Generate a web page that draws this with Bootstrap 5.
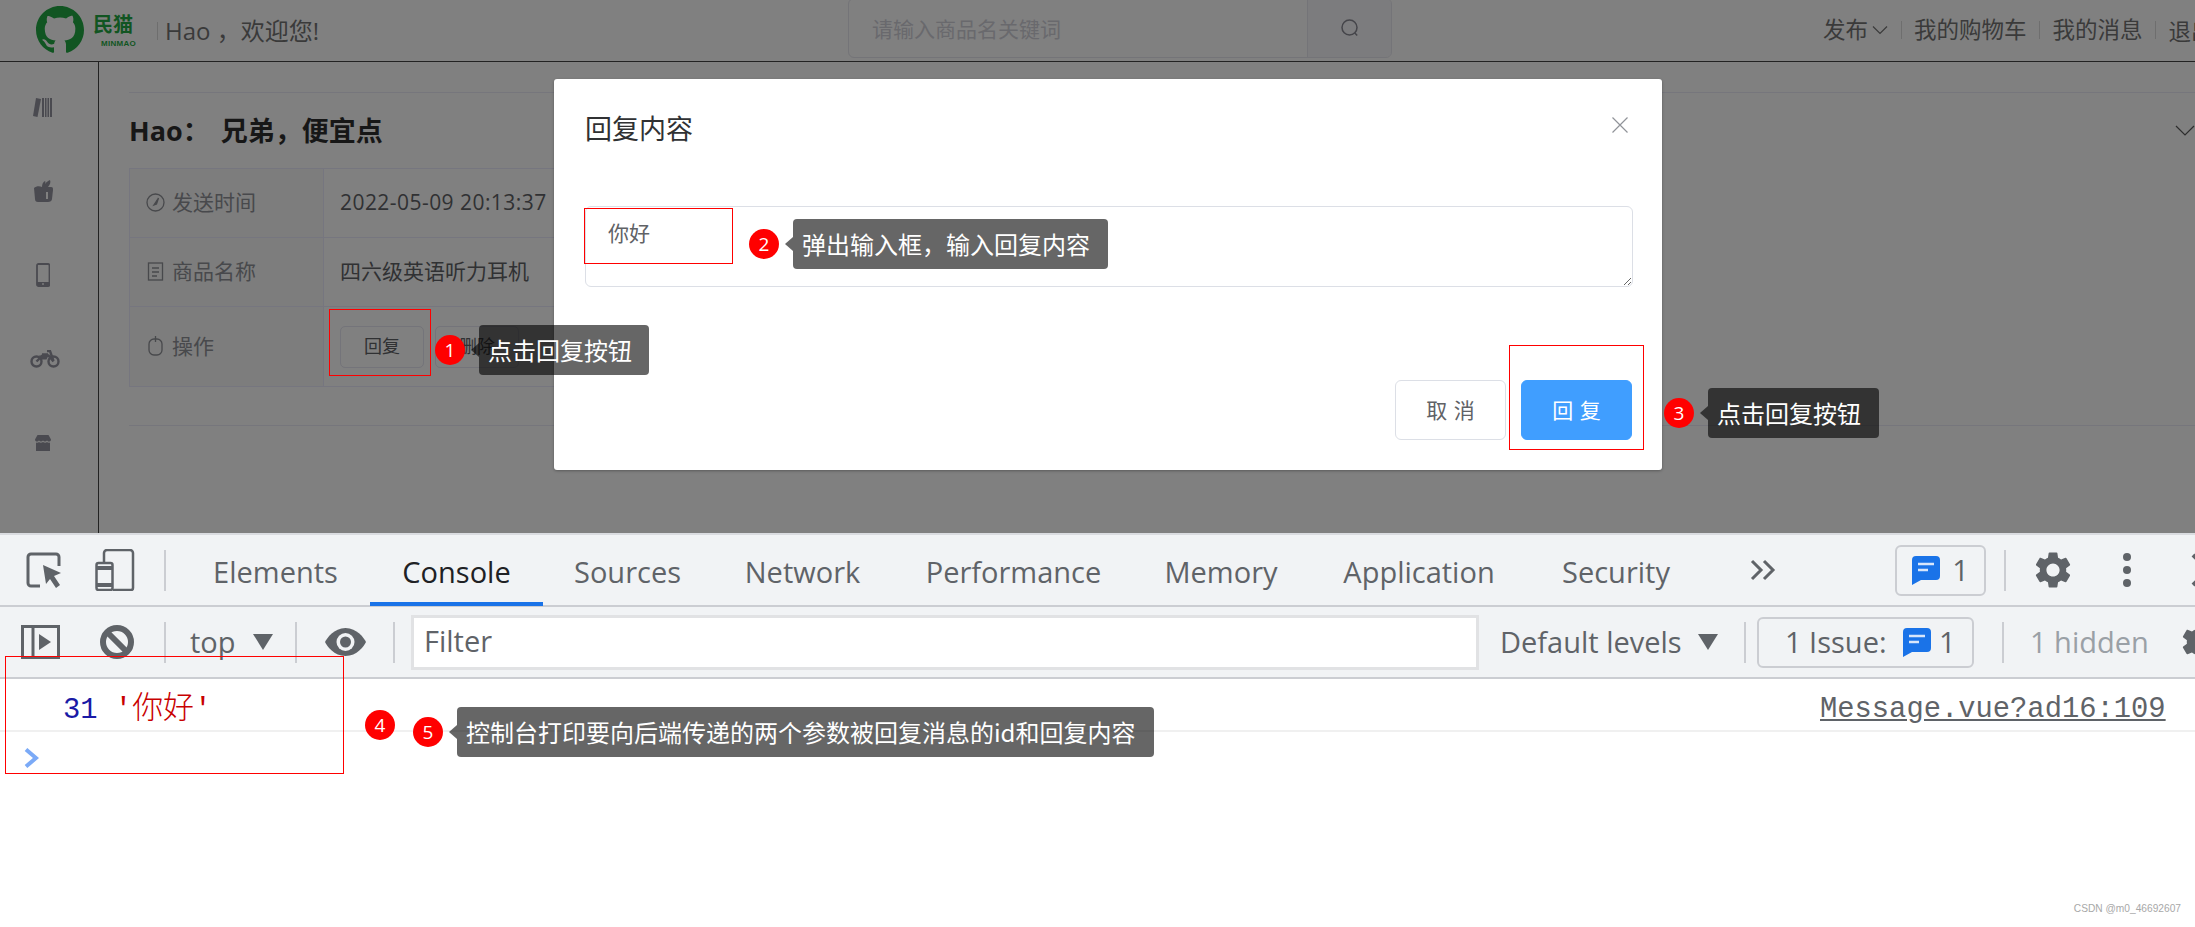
<!doctype html>
<html lang="zh-CN">
<head>
<meta charset="utf-8">
<title>回复内容</title>
<link href="https://cdn.jsdelivr.net/npm/bootstrap@5.3.0/dist/css/bootstrap.min.css" rel="stylesheet">
<style>
html,body{height:100%}
body{position:relative;overflow:hidden;background:#fff;font-family:"Open Sans","Noto Sans CJK SC",sans-serif;color:#202124;width:2195px;height:927px}
.cjk{font-family:"Noto Sans CJK SC",sans-serif}
/* dimmed page */
.dim-zone{height:533px;background:#808080;overflow:hidden}
.dim-head{height:62px;border-bottom:1px solid #222;position:relative}
.logo-mark{width:48px;height:50px;margin-left:36px;margin-top:-1px}
.logo-words{margin-left:9px;color:#115522;width:48px}
.logo-cn{font-size:20px;font-weight:700;line-height:22px;letter-spacing:0}
.logo-en{font-size:8px;font-weight:700;line-height:10px;margin-top:4px;margin-left:8px;letter-spacing:.3px;font-family:"Liberation Sans",sans-serif}
.head-sep{width:1px;height:18px;background:#6e6e6e}
.greet{font-size:24px;color:#3a3a3a;margin-left:7px;white-space:nowrap;width:155px}
.search-wrap{position:absolute;left:848px;top:-2px;width:544px;height:60px;border:1px solid #747478;border-radius:6px;overflow:hidden}
.search-input{padding-left:23px;font-size:21px;color:#69696d;line-height:60px}
.search-btn{width:84px;background:#7c7c7e;border-left:1px solid #747478}
.top-links{position:absolute;left:1823px;top:0;height:60px;font-size:22.5px;color:#3a3a3a;white-space:nowrap}
.top-links .head-sep{height:18px;margin:0 12.5px}
.side-col{width:99px;border-right:1px solid #222;height:471px;padding-right:13px}
.side-ico{height:84px}
.side-first{margin-top:3px}
.main-col{flex:1;padding-left:30px;min-width:0}
.rule{margin:0;border:0;height:1px;background:#76767c;opacity:1}
.rule-top{margin-top:30px}
.msg-title{margin-top:18px;height:40px;font-size:27px;line-height:40px;font-weight:700;color:#171717}
.title-body{margin-left:11px}
.msg-table{width:960px;margin-top:17px;margin-bottom:38px;--bs-table-bg:transparent;--bs-table-color:#303133;--bs-border-color:#76767f;border-color:#76767f;font-size:21px}
.msg-table td{padding:0 16px;vertical-align:middle;border-width:1.5px;line-height:1.2}
.msg-table .lab{width:194px;background:#7d7d7d;color:#48494c;white-space:nowrap}
.msg-table svg{margin-right:7px;vertical-align:-2px}
.stamp{letter-spacing:.45px}
.h69{height:69px}.h80{height:80px}
.btn-mini{width:84px;height:42px;padding:0;font-size:18px;color:#303133;background:transparent;border:1px solid #74747a;border-radius:5px;margin-right:11px}
/* dialog */
.reply-dlg{position:absolute;left:554px;top:79px;width:1108px;height:391px;background:#fff;border-radius:3px;box-shadow:0 1px 3px rgba(0,0,0,.3);padding:30px 30px 30px 31px;color:#303133}
.dlg-title{font-size:27px;line-height:38px;height:38px;color:#303133;margin-bottom:59px}
.dlg-close{position:absolute;left:1058px;top:38px;width:16px;height:16px}
.dlg-area{width:1048px;height:81px;padding:9px 22px 3px;font-size:21px;line-height:32px;color:#606266;border:1.5px solid #dcdfe6;border-radius:6px;font-family:"Noto Sans CJK SC",sans-serif;box-shadow:none}
.dlg-foot{margin-top:93px;gap:15px}
.dlg-btn{width:111px;height:60px;padding:0;font-size:21px;border-radius:6px;border:1.5px solid #dcdfe6;color:#606266;background:#fff;word-spacing:2px}
.dlg-btn.go{background:#409eff;border-color:#409eff;color:#fff}
/* devtools */
.gap-line{height:2px;background:#dadce0}
.dt-bar{height:72px;background:#f1f3f5;border-bottom:2px solid #cbcdd2;position:relative;font-size:29px;color:#5f6368}
.dt-bar>*{flex:none}
.dt-sep{width:2px;height:41px;background:#cbcdd2}
.dt-ico{display:block}
.dt-tabs{margin-left:15px;flex-wrap:nowrap}
.dt-tabs .nav-link{display:flex;align-items:center;justify-content:center;height:72px;padding:8px 0 0;color:#5f6368;border-bottom:4px solid transparent;white-space:nowrap;font-size:29px}
.dt-tabs .nav-link.active{color:#202124;border-bottom-color:#1a73e8}
.w1{width:189px}.w2{width:173px}.w3{width:169px}.w4{width:181px}.w5{width:241px}.w6{width:174px}.w7{width:222px}.w8{width:172px}
.issue-a{width:91px;height:51px;border:2px solid #cbcdd2;border-radius:6px;gap:12px;color:#5f6368}
.issue-b{width:217px;height:51px;border:2px solid #cbcdd2;border-radius:6px;color:#5f6368}
.filter-box{width:1068px;height:55px;background:#fff;border:3px solid #e1e2e4;padding-left:10px;line-height:46px;font-size:29px}
.caret-d{width:0;height:0;border-left:10px solid transparent;border-right:10px solid transparent;border-top:16px solid #5f6368}
.mute{color:#9aa0a6}
.nowrap-t{white-space:nowrap}
/* devtools row spacing */
.m26{margin-left:26px}.m33{margin-left:33px}.m29{margin-left:29px}.m48{margin-left:48px}.m119{margin-left:119px}.m18{margin-left:18px}.m25{margin-left:25px}.m47{margin-left:47px}.m58{margin-left:58px}
.m21{margin-left:21px}.m40{margin-left:40px}.m30{margin-left:30px}.m24{margin-left:24px}.m16{margin-left:16px}.m22{margin-left:22px}.m28{margin-left:28px}.m27{margin-left:27px}.m13{margin-left:13px}.m11{margin-left:11px}
.tw-top{width:47px}.tw-lv{width:185px}.tw-is{width:118px}.tw-hd{width:122px}
.log-row{height:53px;border-bottom:2px solid #f0f0f0;padding-left:63px;font-family:"Liberation Mono","Noto Sans CJK SC",monospace;font-size:28.8px;line-height:51px;position:relative}
.log-num{color:#1a1aa6}
.log-str{color:#c80000}
.log-str span{font-family:"Noto Sans CJK SC",sans-serif;font-size:31px;font-weight:300}
.log-src{position:absolute;left:1820px;top:5px;color:#5f6368;text-decoration:underline}
.prompt-row{padding:16px 0 0 24px}
.mark-wm{position:absolute;right:14px;bottom:11px;font-size:10.2px;color:#a8a8a8;font-family:"Liberation Sans",sans-serif;line-height:14px}
/* annotations */
.a-box{position:absolute;border:1px solid #f00;pointer-events:none}
.a1{left:329px;top:309px;width:102px;height:67px}
.a2{left:584px;top:208px;width:149px;height:56px}
.a3{left:1509px;top:345px;width:135px;height:105px}
.a4{left:5px;top:656px;width:339px;height:118px}
.a-dot{position:absolute;width:30px;height:30px;border-radius:50%;background:#f00;color:#fff;font-size:19px;line-height:30px;text-align:center;font-family:"Open Sans",sans-serif}
.d1{left:435px;top:335px}.d2{left:749px;top:229px}.d3{left:1664px;top:398px}.d4{left:365px;top:710px}.d5{left:413px;top:717px}
.a-tip{position:absolute;height:50px;line-height:49px;background:rgba(0,0,0,.6);color:#fff;font-size:24px;padding:0 18px 0 9px;border-radius:4px;white-space:nowrap;font-family:"Noto Sans CJK SC",sans-serif}
.a-tip::before{content:"";position:absolute;left:-8px;top:18px;border-top:7px solid transparent;border-bottom:7px solid transparent;border-right:8px solid rgba(0,0,0,.6)}
.t1{left:479px;top:325px;width:170px}.t2{left:793px;top:219px;width:315px}.t3{left:1708px;top:388px;width:171px}.t5{left:457px;top:707px;width:697px}
</style>
</head>
<body>
<div class="dim-zone">
  <header class="dim-head d-flex align-items-center">
    <svg class="logo-mark" viewBox="0 0 16 16" fill="#115522"><path d="M8 0C3.58 0 0 3.58 0 8c0 3.54 2.29 6.53 5.47 7.59.4.07.55-.17.55-.38 0-.19-.01-.82-.01-1.49-2.01.37-2.53-.49-2.69-.94-.09-.23-.48-.94-.82-1.13-.28-.15-.68-.52-.01-.53.63-.01 1.08.58 1.23.82.72 1.21 1.87.87 2.33.66.07-.52.28-.87.51-1.07-1.78-.2-3.64-.89-3.64-3.95 0-.87.31-1.59.82-2.15-.08-.2-.36-1.02.08-2.12 0 0 .67-.21 2.2.82.64-.18 1.32-.27 2-.27.68 0 1.36.09 2 .27 1.53-1.04 2.2-.82 2.2-.82.44 1.1.16 1.92.08 2.12.51.56.82 1.27.82 2.15 0 3.07-1.87 3.75-3.65 3.95.29.25.54.73.54 1.48 0 1.07-.01 1.93-.01 2.2 0 .21.15.46.55.38A8.013 8.013 0 0016 8c0-4.42-3.58-8-8-8z"/></svg>
    <div class="logo-words"><div class="logo-cn cjk">民猫</div><div class="logo-en">MINMAO</div></div>
    <span class="head-sep ms-3"></span>
    <span class="greet">Hao &#xFF0C;欢迎您!</span>
    <div class="search-wrap d-flex">
      <div class="search-input flex-grow-1">请输入商品名关键词</div>
      <div class="search-btn d-flex align-items-center justify-content-center">
        <svg width="20" height="20" viewBox="0 0 20 20" fill="none" stroke="#45454a" stroke-width="1.5"><circle cx="9.5" cy="9.5" r="7.5"/><path d="M14.8 15l2.4 2.6"/></svg>
      </div>
    </div>
    <nav class="top-links d-flex align-items-center">
      <span>发布</span><svg class="ms-1" width="16" height="10" viewBox="0 0 16 10" fill="none" stroke="#3a3a3a" stroke-width="1.2"><path d="M1 1.5l7 7 7-7"/></svg>
      <span class="head-sep"></span><span>我的购物车</span>
      <span class="head-sep"></span><span>我的消息</span>
      <span class="head-sep"></span><span class="mt-1">退出</span>
    </nav>
  </header>
  <div class="d-flex">
    <aside class="side-col">
      <div class="side-ico side-first d-flex align-items-center justify-content-center">
        <svg width="20" height="20" viewBox="0 0 20 20" fill="#4a4a50"><path d="M3 1l5 1-3.500 18L0 19z"/><path d="M9 1h2v19H9zM12 1h1.500v19H12zM14.500 1H16v19h-1.500zM17 1h2v19h-2z"/></svg>
      </div>
      <div class="side-ico d-flex align-items-center justify-content-center">
        <svg width="20" height="22" viewBox="0 0 20 22" fill="#4a4a50"><path d="M1 8c2-2 6-2 8-1 0-3 1-5 3-6 1 1 0 2 0 3 1-2 3-3 5-4 1 2 0 5-2 7h3c2 0 2 1 2 3l-1 9c0 2-2 3-4 3H5c-2 0-3-1-3-3z"/><path d="M13 12h2v7h-2z" fill="#808080"/></svg>
      </div>
      <div class="side-ico d-flex align-items-center justify-content-center">
        <svg width="14" height="24" viewBox="0 0 14 24"><rect x="1" y="1" width="12.500" height="22" rx="1.500" fill="none" stroke="#4a4a50" stroke-width="1.800"/><rect x="1" y="19" width="12.500" height="4" fill="#4a4a50"/><circle cx="7" cy="21" r=".9" fill="#808080"/></svg>
      </div>
      <div class="side-ico d-flex align-items-center justify-content-center ps-1">
        <svg width="30" height="18" viewBox="0 0 30 18" fill="none" stroke="#4a4a50" stroke-width="2.400"><circle cx="6.500" cy="11.500" r="5"/><circle cx="23.500" cy="11.500" r="5"/><path d="M6.500 11.500l6-6h6l5 6M12 4.500h6M17 1h3l3.500 10"/><path d="M9 5.500h9.500l-2 4h-5z" fill="#4a4a50" stroke="none"/></svg>
      </div>
      <div class="side-ico d-flex align-items-center justify-content-center">
        <svg width="16" height="16" viewBox="0 0 16 16" fill="#4a4a50"><path d="M2.500 0h11L16 4.500c0 1.600-1 2-2 2s-1.500-.5-2-1c-.5.5-1.200 1-2 1s-1.500-.5-2-1c-.5.500-1.200 1-2 1s-1.500-.5-2-1c-.5.500-1 1-2 1S0 6 0 4.500z"/><path d="M1 7.500c1.500.5 2.500 0 3-.5.800 1 2.700 1 4 0 1.300 1 3.200 1 4 0 .5.500 1.500 1 3 .5V16H1z"/></svg>
      </div>
    </aside>
    <main class="main-col">
      <hr class="rule rule-top">
      <div class="msg-title d-flex justify-content-between align-items-center">
        <span>Hao&#xFF1A;<span class="title-body">兄弟&#xFF0C;便宜点</span></span>
        <svg class="me-n2" width="20" height="12" viewBox="0 0 20 12" fill="none" stroke="#2d2d2d" stroke-width="1.200"><path d="M1 1l9 9 9-9"/></svg>
      </div>
      <table class="table table-bordered msg-table">
        <tbody>
          <tr class="h69"><td class="lab"><svg width="19" height="19" viewBox="0 0 19 19" fill="none" stroke="#48494c" stroke-width="1.300"><circle cx="9.500" cy="9.500" r="8.500"/><path d="M12.500 5l-2 6-2.500 1z" fill="#48494c"/></svg>发送时间</td><td class="stamp">2022-05-09 20:13:37</td></tr>
          <tr class="h69"><td class="lab"><svg width="19" height="19" viewBox="0 0 19 19" fill="none" stroke="#48494c" stroke-width="1.300"><rect x="2.500" y="1" width="14" height="17"/><path d="M6 6h7M6 10h7M6 14h5"/></svg>商品名称</td><td>四六级英语听力耳机</td></tr>
          <tr class="h80"><td class="lab"><svg width="19" height="21" viewBox="0 0 19 21" fill="none" stroke="#48494c" stroke-width="1.300"><rect x="3" y="4" width="13" height="16" rx="5"/><path d="M9.500 1v6"/></svg>操作</td><td><button type="button" class="btn btn-mini">回复</button><button type="button" class="btn btn-mini">删除</button></td></tr>
        </tbody>
      </table>
      <hr class="rule">
    </main>
  </div>
</div>
<div class="gap-line"></div>
<div class="dt-bar d-flex align-items-center">
  <svg class="dt-ico m26" width="36" height="36" viewBox="0 0 36 36" fill="none"><path d="M14 34H5a3 3 0 0 1-3-3V5a3 3 0 0 1 3-3h25a3 3 0 0 1 3 3v9" stroke="#5f6368" stroke-width="3"/><path d="M17 13l18 8-7 3 6 9-4 3-6-9-4 5z" fill="#5f6368"/></svg>
  <svg class="dt-ico m33" width="40" height="42" viewBox="0 0 40 42" fill="none" stroke="#5f6368" stroke-width="2.500"><path d="M9 14V4a3 3 0 0 1 3-3h23a3 3 0 0 1 3 3v35a2 2 0 0 1-2 2H18"/><rect x="1.500" y="14" width="16" height="27" rx="2"/><path d="M1.500 19h16M1.500 36h16" stroke-width="4"/></svg>
  <span class="dt-sep m29"></span>
  <ul class="nav dt-tabs">
    <li class="nav-item w1"><a class="nav-link" href="#">Elements</a></li>
    <li class="nav-item w2"><a class="nav-link active" href="#">Console</a></li>
    <li class="nav-item w3"><a class="nav-link" href="#">Sources</a></li>
    <li class="nav-item w4"><a class="nav-link" href="#">Network</a></li>
    <li class="nav-item w5"><a class="nav-link" href="#">Performance</a></li>
    <li class="nav-item w6"><a class="nav-link" href="#">Memory</a></li>
    <li class="nav-item w7"><a class="nav-link" href="#">Application</a></li>
    <li class="nav-item w8"><a class="nav-link" href="#">Security</a></li>
  </ul>
  <svg class="dt-ico m48" width="26" height="22" viewBox="0 0 26 22" fill="none" stroke="#5f6368" stroke-width="3"><path d="M2 2l9 9-9 9M14 2l9 9-9 9" /></svg>
  <div class="issue-a d-flex align-items-center justify-content-center m119">
    <svg width="28" height="29" viewBox="0 0 28 29"><path d="M4 0h20a4 4 0 0 1 4 4v16a4 4 0 0 1-4 4H9l-9 5V4a4 4 0 0 1 4-4z" fill="#1a73e8"/><path d="M6 8h16M6 14h10" stroke="#d8e6fb" stroke-width="2.500"/></svg>
    <span>1</span>
  </div>
  <span class="dt-sep m18"></span>
  <svg class="dt-ico m25" width="44" height="44" viewBox="0 0 24 24" fill="#5f6368"><path fill-rule="evenodd" d="M19.140 12.940c.04-.3.06-.61.06-.94 0-.32-.02-.64-.07-.94l2.030-1.580a.49.49 0 0 0 .12-.61l-1.920-3.320a.488.488 0 0 0-.59-.22l-2.390.96c-.5-.38-1.030-.7-1.620-.94l-.36-2.540a.484.484 0 0 0-.48-.41h-3.840c-.24 0-.43.17-.47.41l-.36 2.540c-.59.24-1.130.57-1.620.94l-2.390-.96c-.22-.08-.47 0-.59.22L2.740 8.870c-.12.21-.08.47.12.61l2.030 1.580c-.05.3-.09.63-.09.94s.02.64.07.94l-2.030 1.580a.49.49 0 0 0-.12.61l1.920 3.320c.12.22.37.29.59.22l2.390-.96c.5.38 1.030.7 1.620.94l.36 2.540c.05.24.24.41.48.41h3.840c.24 0 .44-.17.47-.41l.36-2.540c.59-.24 1.130-.56 1.620-.94l2.390.96c.22.08.47 0 .59-.22l1.920-3.320c.12-.22.07-.47-.12-.61l-2.010-1.580zM12 15.600c-1.980 0-3.600-1.620-3.600-3.600s1.620-3.600 3.600-3.600 3.600 1.620 3.600 3.600-1.620 3.600-3.600 3.600z"/></svg>
  <svg class="dt-ico m47" width="10" height="36" viewBox="0 0 10 36" fill="#5f6368"><circle cx="5" cy="5" r="4"/><circle cx="5" cy="18" r="4"/><circle cx="5" cy="31" r="4"/></svg>
  <svg class="dt-ico m58" width="36" height="36" viewBox="0 0 36 36" fill="none" stroke="#5f6368" stroke-width="4"><path d="M3 3l30 30M33 3L3 33"/></svg>
</div>
<div class="dt-bar d-flex align-items-center">
  <svg class="dt-ico m21" width="39" height="34" viewBox="0 0 39 34" fill="none" stroke="#5f6368" stroke-width="3"><rect x="1.500" y="1.500" width="36" height="31"/><path d="M12 0v34" stroke-width="3"/><path d="M18 9l12 8-12 8z" fill="#5f6368" stroke="none"/></svg>
  <svg class="dt-ico m40" width="34" height="34" viewBox="0 0 34 34" fill="none" stroke="#5f6368" stroke-width="6"><circle cx="17" cy="17" r="14"/><path d="M7 7l20 20"/></svg>
  <span class="dt-sep m30"></span>
  <span class="m24 tw-top">top</span>
  <span class="caret-d m16"></span>
  <span class="dt-sep m22"></span>
  <svg class="dt-ico m28" width="41" height="28" viewBox="0 0 41 28"><path d="M20.500 0C32 0 39 10 41 14c-2 4-9 14-20.500 14S2 18 0 14C2 10 9 0 20.500 0z" fill="#5f6368"/><circle cx="20.500" cy="14" r="9" fill="#f1f3f5"/><circle cx="20.500" cy="14" r="5.500" fill="#5f6368"/></svg>
  <span class="dt-sep m27"></span>
  <div class="filter-box m16">Filter</div>
  <span class="m21 tw-lv nowrap-t">Default levels</span>
  <span class="caret-d m13"></span>
  <span class="dt-sep m26"></span>
  <div class="issue-b d-flex align-items-center m11">
    <span class="m26 tw-is nowrap-t">1 Issue:</span>
    <svg width="28" height="29" viewBox="0 0 28 29"><path d="M4 0h20a4 4 0 0 1 4 4v16a4 4 0 0 1-4 4H9l-9 5V4a4 4 0 0 1 4-4z" fill="#1a73e8"/><path d="M6 8h16M6 14h10" stroke="#d8e6fb" stroke-width="2.500"/></svg>
    <span class="ms-2">1</span>
  </div>
  <span class="dt-sep m28"></span>
  <span class="mute m26 tw-hd nowrap-t">1 hidden</span>
  <svg class="dt-ico m26" width="44" height="44" viewBox="0 0 24 24" fill="#5f6368"><path d="M19.140 12.940c.04-.3.06-.61.06-.94 0-.32-.02-.64-.07-.94l2.030-1.580a.49.49 0 0 0 .12-.61l-1.920-3.320a.488.488 0 0 0-.59-.22l-2.390.96c-.5-.38-1.030-.7-1.620-.94l-.36-2.540a.484.484 0 0 0-.48-.41h-3.840c-.24 0-.43.17-.47.41l-.36 2.540c-.59.24-1.130.57-1.620.94l-2.390-.96c-.22-.08-.47 0-.59.22L2.740 8.870c-.12.21-.08.47.12.61l2.030 1.580c-.05.3-.09.63-.09.94s.02.64.07.94l-2.030 1.580a.49.49 0 0 0-.12.61l1.920 3.320c.12.22.37.29.59.22l2.390-.96c.5.38 1.030.7 1.620.94l.36 2.540c.05.24.24.41.48.41h3.840c.24 0 .44-.17.47-.41l.36-2.540c.59-.24 1.130-.56 1.620-.94l2.390.96c.22.08.47 0 .59-.22l1.920-3.320c.12-.22.07-.47-.12-.61l-2.010-1.580z"/></svg>
</div>
<div class="log-row"><span class="log-num">31</span> <span class="log-str">'<span>你好</span>'</span><a class="log-src" href="#">Message.vue?ad16:109</a></div>
<div class="prompt-row"><svg class="d-block" width="15" height="20" viewBox="0 0 15 20" fill="none" stroke="#7baaf7" stroke-width="4"><path d="M2 1.500L12 10 2 18.500"/></svg></div>

<section class="reply-dlg">
  <div class="dlg-title cjk">回复内容</div>
  <svg class="dlg-close" viewBox="0 0 16 16" fill="none" stroke="#909399" stroke-width="1.200"><path d="M.5.5l15 15M15.500.5l-15 15"/></svg>
  <textarea class="form-control dlg-area">你好</textarea>
  <div class="dlg-foot d-flex justify-content-end">
    <button type="button" class="btn dlg-btn cjk">取 消</button>
    <button type="button" class="btn dlg-btn go cjk">回 复</button>
  </div>
</section>

<div class="a-box a1"></div><div class="a-box a2"></div><div class="a-box a3"></div><div class="a-box a4"></div>
<div class="a-dot d1">1</div><div class="a-tip t1">点击回复按钮</div>
<div class="a-dot d2">2</div><div class="a-tip t2">弹出输入框&#xFF0C;输入回复内容</div>
<div class="a-dot d3">3</div><div class="a-tip t3">点击回复按钮</div>
<div class="a-dot d4">4</div>
<div class="a-dot d5">5</div><div class="a-tip t5">控制台打印要向后端传递的两个参数被回复消息的id和回复内容</div>
<div class="mark-wm">CSDN @m0_46692607</div>
<script src="https://cdn.jsdelivr.net/npm/bootstrap@5.3.0/dist/js/bootstrap.bundle.min.js"></script>
</body>
</html>
